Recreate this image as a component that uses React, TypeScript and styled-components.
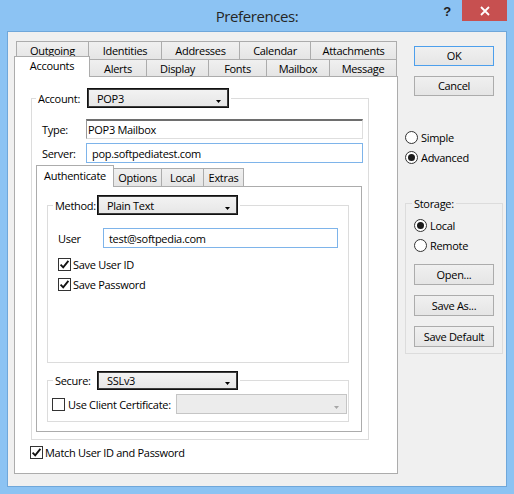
import React from "react";
import styled, { createGlobalStyle } from "styled-components";

const Global = createGlobalStyle`
  html, body { margin: 0; padding: 0; }
  body {
    font-family: "Open Sans", "Liberation Sans", sans-serif;
    font-size: 11px;
    letter-spacing: -0.3px;
    color: #000;
  }
`;

const Window = styled.div`
  width: 514px;
  height: 494px;
  box-sizing: border-box;
  background: #8cc3f3;
  display: flex;
  flex-direction: column;
  padding: 0 7px 7px 7px;
`;

const TitleBar = styled.div`
  height: 31px;
  flex: none;
  display: grid;
  grid-template-columns: 1fr auto 1fr;
`;

const Title = styled.div`
  grid-column: 2;
  align-self: center;
  font-size: 15px;
  letter-spacing: -0.4px;
  color: #262626;
  padding-top: 1px;
`;

const Controls = styled.div`
  grid-column: 3;
  justify-self: end;
  display: flex;
  align-items: flex-start;
`;

const HelpGlyph = styled.div`
  font-family: "Liberation Sans", sans-serif;
  font-weight: bold;
  font-size: 13px;
  color: #1e1e1e;
  padding-top: 4px;
  margin-right: 11px;
`;

const CloseButton = styled.div`
  width: 45px;
  height: 21px;
  background: #c75050;
  display: flex;
  align-items: center;
  justify-content: center;
`;

const Client = styled.div`
  flex: 1;
  box-sizing: border-box;
  background: #f0f0f0;
  border: 1px solid #6fa7da;
  display: flex;
  align-items: flex-start;
  padding: 9px 0 0 6px;
`;

const Main = styled.div`
  width: 384px;
  display: flex;
  flex-direction: column;
`;

const TabRow = styled.div<{ $h: number; $indent?: number }>`
  display: flex;
  align-items: flex-start;
  height: ${(p) => p.$h}px;
  margin-left: ${(p) => p.$indent ?? 0}px;
`;

const Tab = styled.div<{ $w: number; $selected?: boolean; $selH?: number }>`
  box-sizing: border-box;
  width: ${(p) => p.$w}px;
  height: ${(p) => (p.$selected ? `${p.$selH}px` : "100%")};
  margin-top: ${(p) => (p.$selected ? "-3px" : "0")};
  border: 1px solid #acacac;
  border-bottom: none;
  background: ${(p) =>
    p.$selected ? "#ffffff" : "linear-gradient(#f0f0f0, #e5e5e5)"};
  display: flex;
  align-items: center;
  justify-content: center;
  padding-bottom: ${(p) => (p.$selected ? "3px" : "0")};
  position: relative;
  z-index: ${(p) => (p.$selected ? 2 : 1)};
  white-space: nowrap;
  & + & {
    margin-left: -1px;
  }
`;

const Panel = styled.div<{ $w: number; $h: number }>`
  box-sizing: border-box;
  width: ${(p) => p.$w}px;
  height: ${(p) => p.$h}px;
  border: 1px solid #acacac;
  background: #fff;
`;

const OuterPanel = styled(Panel)`
  padding: 11px 0 0 16px;
  display: flex;
  flex-direction: column;
`;

const InnerPanel = styled(Panel)`
  padding: 8px 12px 9px 10px;
  display: flex;
  flex-direction: column;
`;

const GroupBox = styled.fieldset<{ $w?: number; $grow?: boolean; $mt?: number }>`
  box-sizing: border-box;
  margin: ${(p) => p.$mt ?? 0}px 0 0 0;
  padding: 0;
  min-width: 0;
  border: 1px solid #dcdcdc;
  width: ${(p) => (p.$w ? `${p.$w}px` : "auto")};
  flex: ${(p) => (p.$grow ? "1" : "none")};
`;

const GroupLegend = styled.legend<{ $offset: number }>`
  margin-left: ${(p) => p.$offset}px;
  padding: 0 2px;
  display: flex;
  align-items: center;
  gap: 4px;
  line-height: 15px;
`;

const LegendLabel = styled.span<{ $w: number }>`
  width: ${(p) => p.$w}px;
  white-space: nowrap;
`;

const GroupBody = styled.div<{ $pad: string }>`
  padding: ${(p) => p.$pad};
`;

const Combo = styled.div<{ $w: number; $disabled?: boolean; $h?: number }>`
  box-sizing: border-box;
  flex: none;
  width: ${(p) => p.$w}px;
  height: ${(p) => p.$h ?? 20}px;
  border: 1px solid ${(p) => (p.$disabled ? "#c5c5c5" : "#111")};
  box-shadow: ${(p) => (p.$disabled ? "none" : "inset 0 0 0 1px #3c3c3c")};
  background: ${(p) =>
    p.$disabled ? "#ececec" : "linear-gradient(#f3f3f3, #e6e6e6)"};
  display: flex;
  align-items: center;
  padding-left: 9px;
  color: ${(p) => (p.$disabled ? "#8d8d8d" : "#000")};
`;

const ComboText = styled.span`
  flex: 1;
`;

const ComboArrow = styled.svg`
  align-self: flex-end;
  margin: 0 7px 4px 0;
`;

const FormGrid = styled.div<{ $label: number; $indent?: number }>`
  display: grid;
  grid-template-columns: ${(p) => p.$label}px 1fr;
  row-gap: 4px;
  align-items: center;
  padding-left: ${(p) => p.$indent ?? 0}px;
`;

const FieldLabel = styled.span``;

const StaticBox = styled.div`
  box-sizing: border-box;
  height: 20px;
  background: #fff;
  border-top: 2px solid #6e6e6e;
  border-left: 1px solid #9a9a9a;
  border-right: 1px solid #dedede;
  border-bottom: 1px solid #dedede;
  display: flex;
  align-items: center;
  padding-left: 1px;
`;

const TextBox = styled.div`
  box-sizing: border-box;
  height: 20px;
  background: #fff;
  border: 1px solid #7eb4ea;
  display: flex;
  align-items: center;
  padding-left: 5px;
`;

const InnerTabs = styled.div`
  margin-top: 5px;
  display: flex;
  flex-direction: column;
`;

const CheckRow = styled.div<{ $mt?: number; $ml?: number }>`
  display: flex;
  align-items: center;
  height: 13px;
  gap: 2px;
  margin-top: ${(p) => p.$mt ?? 0}px;
  margin-left: ${(p) => p.$ml ?? 0}px;
  white-space: nowrap;
`;

const CheckBoxSquare = styled.span`
  box-sizing: border-box;
  width: 13px;
  height: 13px;
  flex: none;
  border: 1px solid #333;
  background: #fff;
  display: flex;
  align-items: center;
  justify-content: center;
`;

const SecureRow = styled.div`
  display: flex;
  align-items: center;
  height: 20px;
  gap: 3px;
  white-space: nowrap;
`;

const PushRight = styled.div`
  margin-left: auto;
`;

const Side = styled.div`
  width: 98px;
  margin-left: 7px;
  padding-top: 5px;
  display: flex;
  flex-direction: column;
`;

const Button = styled.div<{ $default?: boolean; $h?: number; $mt?: number; $ml?: number }>`
  box-sizing: border-box;
  width: 80px;
  height: ${(p) => p.$h ?? 20}px;
  margin-top: ${(p) => p.$mt ?? 0}px;
  margin-left: ${(p) => p.$ml ?? 0}px;
  border: 1px solid ${(p) => (p.$default ? "#4d9fec" : "#acacac")};
  background: linear-gradient(#f0f0f0, #e5e5e5);
  display: flex;
  align-items: center;
  justify-content: center;
  padding-bottom: 1px;
`;

const RadioRow = styled.div<{ $mt?: number }>`
  display: flex;
  align-items: center;
  height: 20px;
  gap: 3px;
  margin-top: ${(p) => p.$mt ?? 0}px;
`;

const RadioCircle = styled.span<{ $on?: boolean }>`
  box-sizing: border-box;
  width: 13px;
  height: 13px;
  flex: none;
  border-radius: 50%;
  border: 1px solid #333;
  background: #fff;
  display: flex;
  align-items: center;
  justify-content: center;
  &::after {
    content: "";
    width: 7px;
    height: 7px;
    border-radius: 50%;
    background: #1b1b1b;
    display: ${(p) => (p.$on ? "block" : "none")};
  }
`;

const Check = () => (
  <CheckBoxSquare>
    <svg width="11" height="11" viewBox="0 0 11 11">
      <path d="M1.6 5.6 L4.2 8.3 L9.4 1.9" fill="none" stroke="#111" strokeWidth="1.9" />
    </svg>
  </CheckBoxSquare>
);

const Arrow = ({ color = "#000" }: { color?: string }) => (
  <ComboArrow width="5" height="3" viewBox="0 0 5 3">
    <path d="M0 0 H5 L2.5 3 Z" fill={color} />
  </ComboArrow>
);

const Dropdown = ({ w, text, h }: { w: number; text: string; h?: number }) => (
  <Combo $w={w} $h={h}>
    <ComboText>{text}</ComboText>
    <Arrow />
  </Combo>
);

const backTabs: [string, number][] = [
  ["Outgoing", 73],
  ["Identities", 74],
  ["Addresses", 79],
  ["Calendar", 72],
  ["Attachments", 87],
];

const frontTabs: [string, number][] = [
  ["Accounts", 76],
  ["Alerts", 58],
  ["Display", 63],
  ["Fonts", 59],
  ["Mailbox", 64],
  ["Message", 68],
];

const innerTabs: [string, number][] = [
  ["Authenticate", 78],
  ["Options", 49],
  ["Local", 43],
  ["Extras", 41],
];

export default function App() {
  return (
    <>
      <Global />
      <Window>
        <TitleBar>
          <Title>Preferences:</Title>
          <Controls>
            <HelpGlyph>?</HelpGlyph>
            <CloseButton>
              <svg width="10" height="10" viewBox="0 0 10 10">
                <path d="M1 1 L9 9 M9 1 L1 9" stroke="#fff" strokeWidth="1.8" />
              </svg>
            </CloseButton>
          </Controls>
        </TitleBar>
        <Client>
          <Main>
            <TabRow $h={18} $indent={2}>
              {backTabs.map(([t, w]) => (
                <Tab key={t} $w={w}>
                  {t}
                </Tab>
              ))}
            </TabRow>
            <TabRow $h={17}>
              {frontTabs.map(([t, w], i) => (
                <Tab key={t} $w={w} $selected={i === 0} $selH={21}>
                  {t}
                </Tab>
              ))}
            </TabRow>
            <OuterPanel $w={384} $h={398}>
              <GroupBox $w={338}>
                <GroupLegend $offset={4}>
                  <LegendLabel $w={45}>Account:</LegendLabel>
                  <Dropdown w={142} text="POP3" />
                </GroupLegend>
                <GroupBody $pad="11px 5px 7px 4px">
                  <FormGrid $label={44} $indent={6}>
                    <FieldLabel>Type:</FieldLabel>
                    <StaticBox>POP3 Mailbox</StaticBox>
                    <FieldLabel>Server:</FieldLabel>
                    <TextBox>pop.softpediatest.com</TextBox>
                  </FormGrid>
                  <InnerTabs>
                    <TabRow $h={18}>
                      {innerTabs.map(([t, w], i) => (
                        <Tab key={t} $w={w} $selected={i === 0} $selH={22}>
                          {t}
                        </Tab>
                      ))}
                    </TabRow>
                    <InnerPanel $w={326} $h={246}>
                      <GroupBox $grow>
                        <GroupLegend $offset={5}>
                          <LegendLabel $w={38}>Method:</LegendLabel>
                          <Dropdown w={141} text="Plain Text" />
                        </GroupLegend>
                        <GroupBody $pad="13px 10px 0 10px">
                          <FormGrid $label={45}>
                            <FieldLabel>User</FieldLabel>
                            <TextBox>test@softpedia.com</TextBox>
                          </FormGrid>
                          <CheckRow $mt={10}>
                            <Check />
                            <span>Save User ID</span>
                          </CheckRow>
                          <CheckRow $mt={7}>
                            <Check />
                            <span>Save Password</span>
                          </CheckRow>
                        </GroupBody>
                      </GroupBox>
                      <GroupBox $mt={8}>
                        <GroupLegend $offset={5}>
                          <LegendLabel $w={38}>Secure:</LegendLabel>
                          <Dropdown w={141} h={19} text="SSLv3" />
                        </GroupLegend>
                        <GroupBody $pad="4px 1px 7px 4px">
                          <SecureRow>
                            <CheckBoxSquare />
                            <span>Use Client Certificate:</span>
                            <PushRight>
                              <Combo $w={171} $disabled>
                                <ComboText />
                                <Arrow color="#a6a6a6" />
                              </Combo>
                            </PushRight>
                          </SecureRow>
                        </GroupBody>
                      </GroupBox>
                    </InnerPanel>
                  </InnerTabs>
                </GroupBody>
              </GroupBox>
              <CheckRow $mt={6} $ml={-1}>
                <Check />
                <span>Match User ID and Password</span>
              </CheckRow>
            </OuterPanel>
          </Main>
          <Side>
            <Button $default $ml={9}>OK</Button>
            <Button $ml={9} $mt={10}>Cancel</Button>
            <RadioRow $mt={31}>
              <RadioCircle />
              <span>Simple</span>
            </RadioRow>
            <RadioRow>
              <RadioCircle $on />
              <span>Advanced</span>
            </RadioRow>
            <GroupBox $w={98} $mt={29}>
              <GroupLegend $offset={6}>
                <span>Storage:</span>
              </GroupLegend>
              <GroupBody $pad="4px 0 6px 8px">
                <RadioRow>
                  <RadioCircle $on />
                  <span>Local</span>
                </RadioRow>
                <RadioRow>
                  <RadioCircle />
                  <span>Remote</span>
                </RadioRow>
                <Button $h={21} $mt={9}>Open...</Button>
                <Button $h={21} $mt={10}>Save As...</Button>
                <Button $h={21} $mt={10}>Save Default</Button>
              </GroupBody>
            </GroupBox>
          </Side>
        </Client>
      </Window>
    </>
  );
}
